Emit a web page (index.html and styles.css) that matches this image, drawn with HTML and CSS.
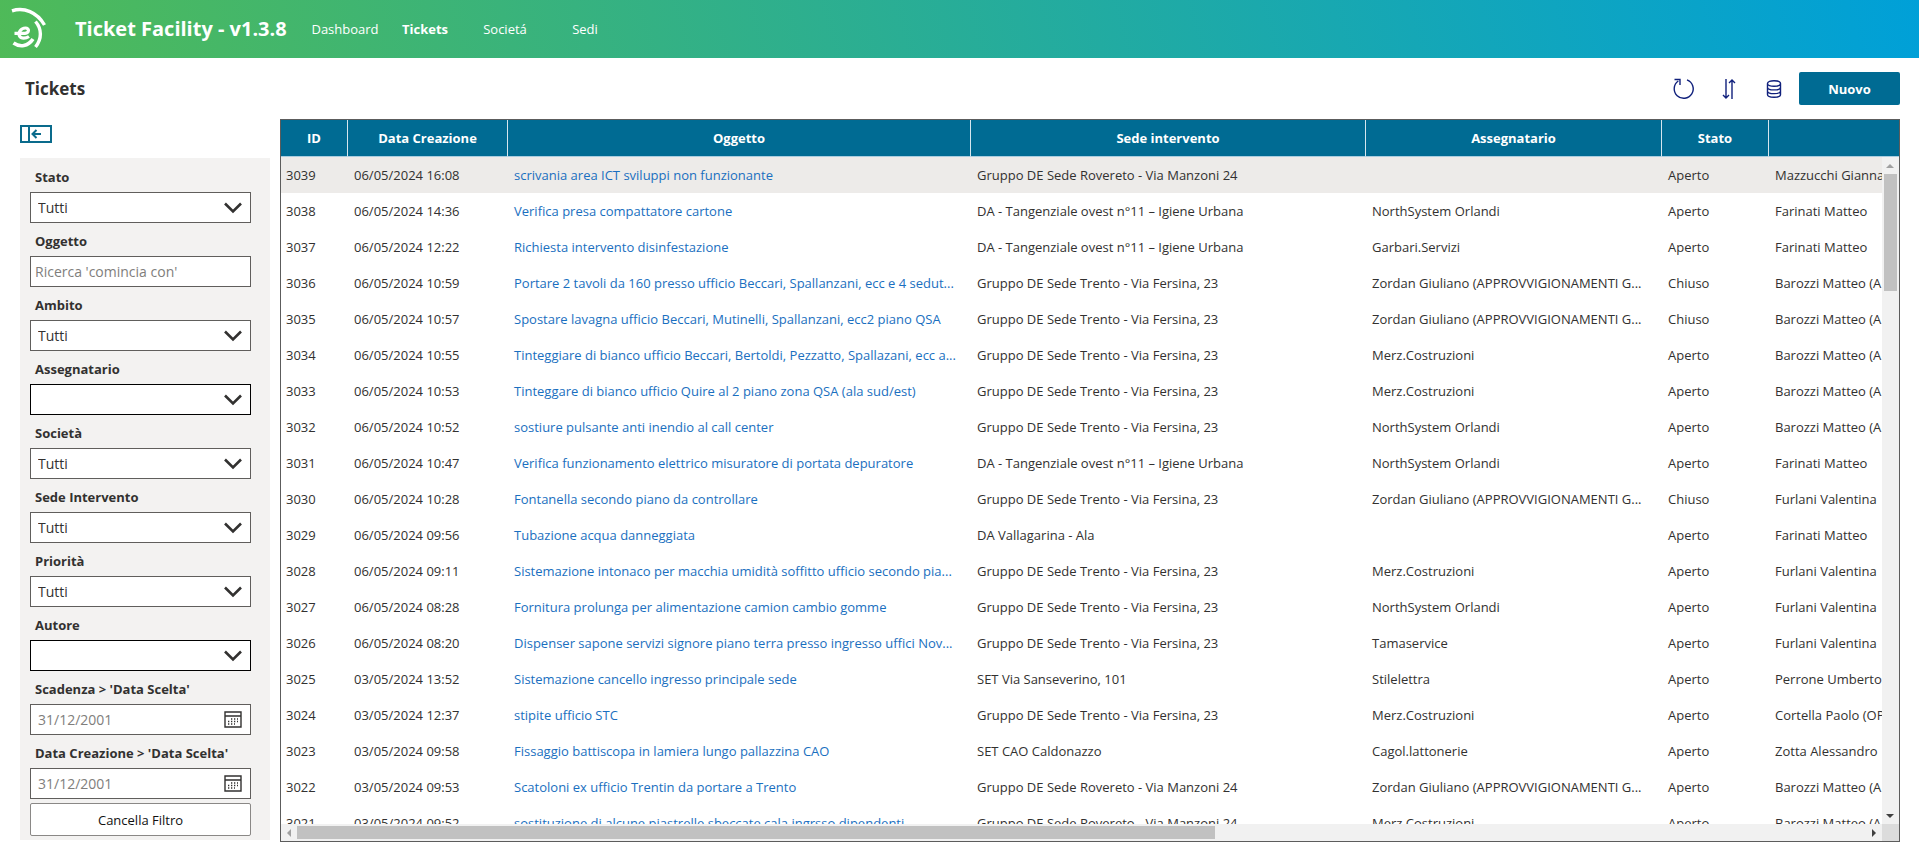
FILE: index.html
```html
<!DOCTYPE html>
<html lang="it">
<head>
<meta charset="utf-8">
<meta name="viewport" content="width=device-width, initial-scale=1">
<title>Ticket Facility</title>
<link rel="stylesheet" href="styles.css">
</head>
<body>
<svg class="sprite" aria-hidden="true">
  <symbol id="chevron" viewBox="0 0 18 12"><path d="M1 1.500 L9 9.500 L17 1.500" fill="none" stroke="currentColor" stroke-width="2.600"/></symbol>
  <symbol id="calendar" viewBox="0 0 18 17">
    <path d="M1 1H17V16H1Z M1 5H17" fill="none" stroke="currentColor" stroke-width="1.4"/>
    <path d="M7 8H14 M4 10.500H14 M4 13H11" fill="none" stroke="currentColor" stroke-width="1.3" stroke-dasharray="1.300 1.700"/>
  </symbol>
</svg>

<header class="topbar">
  <svg class="logo" viewBox="0 0 60 58" role="img" aria-label="Logo">
    <g fill="none" stroke="#fff">
      <path d="M12 10.800 C24 7 37 12 44.500 25" stroke-width="3.400"/>
      <path d="M35.500 21.500 C42 29 42 39 35.500 47" stroke-width="3.400"/>
      <path d="M13.500 43 C20 47.500 28 46.500 33 39" stroke-width="3.600"/>
      <path d="M14.500 33.300 H25 C29.500 33 29.500 28 25.500 28 C20.500 28 18 33 19.500 36 C21 39 26 38.500 29 36.500" stroke-width="3.200"/>
    </g>
  </svg>
  <h1 class="brand">Ticket Facility - v1.3.8</h1>
  <nav class="nav">
    <a href="#dashboard">Dashboard</a>
    <a href="#tickets" class="active" aria-current="page">Tickets</a>
    <a href="#societa">Societá</a>
    <a href="#sedi">Sedi</a>
  </nav>
</header>

<div class="toolbar">
  <h2 class="page-title">Tickets</h2>
  <div class="actions">
    <button class="icon-btn" type="button" aria-label="Aggiorna">
      <svg width="24" height="24" viewBox="0 0 24 24"><path d="M6.300 4 A9.500 9.500 0 1 0 15 2.900 M2.500 2.500 H8 V8" /></svg>
    </button>
    <button class="icon-btn" type="button" aria-label="Ordina">
      <svg width="24" height="24" viewBox="0 0 24 24"><path d="M9 2V21 M6 18 L9 21 L12 18 M15 22V3 M12 6 L15 3 L18 6"/></svg>
    </button>
    <button class="icon-btn" type="button" aria-label="Dati">
      <svg width="24" height="24" viewBox="0 0 24 24"><path d="M5.500 6.500 C5.500 2.800 18.500 2.800 18.500 6.500 C18.500 10.200 5.500 10.200 5.500 6.500 V17.500 C5.500 21.200 18.500 21.200 18.500 17.500 V6.500 M5.500 10.200 C5.500 13.800 18.500 13.800 18.500 10.200 M5.500 13.900 C5.500 17.500 18.500 17.500 18.500 13.900"/></svg>
    </button>
    <button class="primary" type="button">Nuovo</button>
  </div>
</div>

<main class="layout">
  <aside class="side">
    <button class="collapse" type="button" aria-label="Nascondi filtri">
      <svg width="32" height="18" viewBox="0 0 32 18"><path d="M1 1H31V17H1Z M9 1V17 M21 9H13 M16.500 5 L12.500 9 L16.500 13"/></svg>
    </button>
    <form class="filters">
      <label for="stato">Stato</label>
      <div class="field"><select id="stato"><option>Tutti</option></select><svg class="chev"><use href="#chevron"/></svg></div>
      <label for="oggetto">Oggetto</label>
      <div class="field"><input id="oggetto" class="search" type="text" placeholder="Ricerca 'comincia con'"></div>
      <label for="ambito">Ambito</label>
      <div class="field"><select id="ambito"><option>Tutti</option></select><svg class="chev"><use href="#chevron"/></svg></div>
      <label for="assegnatario">Assegnatario</label>
      <div class="field strong"><select id="assegnatario"><option></option></select><svg class="chev"><use href="#chevron"/></svg></div>
      <label for="societa">Società</label>
      <div class="field"><select id="societa"><option>Tutti</option></select><svg class="chev"><use href="#chevron"/></svg></div>
      <label for="sede">Sede Intervento</label>
      <div class="field"><select id="sede"><option>Tutti</option></select><svg class="chev"><use href="#chevron"/></svg></div>
      <label for="priorita">Priorità</label>
      <div class="field"><select id="priorita"><option>Tutti</option></select><svg class="chev"><use href="#chevron"/></svg></div>
      <label for="autore">Autore</label>
      <div class="field strong"><select id="autore"><option></option></select><svg class="chev"><use href="#chevron"/></svg></div>
      <label for="scadenza">Scadenza &gt; 'Data Scelta'</label>
      <div class="field"><input id="scadenza" type="text" placeholder="31/12/2001"><svg class="cal"><use href="#calendar"/></svg></div>
      <label for="creazione">Data Creazione &gt; 'Data Scelta'</label>
      <div class="field"><input id="creazione" type="text" placeholder="31/12/2001"><svg class="cal"><use href="#calendar"/></svg></div>
      <button class="clear" type="button">Cancella Filtro</button>
    </form>
  </aside>

  <section class="grid">
    <div class="viewport">
      <table>
        <colgroup><col class="c-id"><col class="c-date"><col class="c-subject"><col class="c-site"><col class="c-owner"><col class="c-state"><col class="c-author"></colgroup>
        <thead><tr><th>ID</th><th>Data Creazione</th><th>Oggetto</th><th>Sede intervento</th><th>Assegnatario</th><th>Stato</th><th></th></tr></thead>
        <tbody>
          <tr class="selected"><td>3039</td><td>06/05/2024 16:08</td><td><a href="#3039">scrivania area ICT sviluppi non funzionante</a></td><td>Gruppo DE Sede Rovereto - Via Manzoni 24</td><td></td><td>Aperto</td><td>Mazzucchi Gianna</td></tr>
          <tr><td>3038</td><td>06/05/2024 14:36</td><td><a href="#3038">Verifica presa compattatore cartone</a></td><td>DA - Tangenziale ovest n°11 – Igiene Urbana</td><td>NorthSystem Orlandi</td><td>Aperto</td><td>Farinati Matteo</td></tr>
          <tr><td>3037</td><td>06/05/2024 12:22</td><td><a href="#3037">Richiesta intervento disinfestazione</a></td><td>DA - Tangenziale ovest n°11 – Igiene Urbana</td><td>Garbari.Servizi</td><td>Aperto</td><td>Farinati Matteo</td></tr>
          <tr><td>3036</td><td>06/05/2024 10:59</td><td><a href="#3036">Portare 2 tavoli da 160 presso ufficio Beccari, Spallanzani, ecc e 4 sedut...</a></td><td>Gruppo DE Sede Trento - Via Fersina, 23</td><td>Zordan Giuliano (APPROVVIGIONAMENTI G...</td><td>Chiuso</td><td>Barozzi Matteo (A</td></tr>
          <tr><td>3035</td><td>06/05/2024 10:57</td><td><a href="#3035">Spostare lavagna ufficio Beccari, Mutinelli, Spallanzani, ecc2 piano QSA</a></td><td>Gruppo DE Sede Trento - Via Fersina, 23</td><td>Zordan Giuliano (APPROVVIGIONAMENTI G...</td><td>Chiuso</td><td>Barozzi Matteo (A</td></tr>
          <tr><td>3034</td><td>06/05/2024 10:55</td><td><a href="#3034">Tinteggiare di bianco ufficio Beccari, Bertoldi, Pezzatto, Spallazani, ecc a...</a></td><td>Gruppo DE Sede Trento - Via Fersina, 23</td><td>Merz.Costruzioni</td><td>Aperto</td><td>Barozzi Matteo (A</td></tr>
          <tr><td>3033</td><td>06/05/2024 10:53</td><td><a href="#3033">Tinteggare di bianco ufficio Quire al 2 piano zona QSA (ala sud/est)</a></td><td>Gruppo DE Sede Trento - Via Fersina, 23</td><td>Merz.Costruzioni</td><td>Aperto</td><td>Barozzi Matteo (A</td></tr>
          <tr><td>3032</td><td>06/05/2024 10:52</td><td><a href="#3032">sostiure pulsante anti inendio al call center</a></td><td>Gruppo DE Sede Trento - Via Fersina, 23</td><td>NorthSystem Orlandi</td><td>Aperto</td><td>Barozzi Matteo (A</td></tr>
          <tr><td>3031</td><td>06/05/2024 10:47</td><td><a href="#3031">Verifica funzionamento elettrico misuratore di portata depuratore</a></td><td>DA - Tangenziale ovest n°11 – Igiene Urbana</td><td>NorthSystem Orlandi</td><td>Aperto</td><td>Farinati Matteo</td></tr>
          <tr><td>3030</td><td>06/05/2024 10:28</td><td><a href="#3030">Fontanella secondo piano da controllare</a></td><td>Gruppo DE Sede Trento - Via Fersina, 23</td><td>Zordan Giuliano (APPROVVIGIONAMENTI G...</td><td>Chiuso</td><td>Furlani Valentina</td></tr>
          <tr><td>3029</td><td>06/05/2024 09:56</td><td><a href="#3029">Tubazione acqua danneggiata</a></td><td>DA Vallagarina - Ala</td><td></td><td>Aperto</td><td>Farinati Matteo</td></tr>
          <tr><td>3028</td><td>06/05/2024 09:11</td><td><a href="#3028">Sistemazione intonaco per macchia umidità soffitto ufficio secondo pia...</a></td><td>Gruppo DE Sede Trento - Via Fersina, 23</td><td>Merz.Costruzioni</td><td>Aperto</td><td>Furlani Valentina</td></tr>
          <tr><td>3027</td><td>06/05/2024 08:28</td><td><a href="#3027">Fornitura prolunga per alimentazione camion cambio gomme</a></td><td>Gruppo DE Sede Trento - Via Fersina, 23</td><td>NorthSystem Orlandi</td><td>Aperto</td><td>Furlani Valentina</td></tr>
          <tr><td>3026</td><td>06/05/2024 08:20</td><td><a href="#3026">Dispenser sapone servizi signore piano terra presso ingresso uffici Nov...</a></td><td>Gruppo DE Sede Trento - Via Fersina, 23</td><td>Tamaservice</td><td>Aperto</td><td>Furlani Valentina</td></tr>
          <tr><td>3025</td><td>03/05/2024 13:52</td><td><a href="#3025">Sistemazione cancello ingresso principale sede</a></td><td>SET Via Sanseverino, 101</td><td>Stilelettra</td><td>Aperto</td><td>Perrone Umberto</td></tr>
          <tr><td>3024</td><td>03/05/2024 12:37</td><td><a href="#3024">stipite ufficio STC</a></td><td>Gruppo DE Sede Trento - Via Fersina, 23</td><td>Merz.Costruzioni</td><td>Aperto</td><td>Cortella Paolo (OP</td></tr>
          <tr><td>3023</td><td>03/05/2024 09:58</td><td><a href="#3023">Fissaggio battiscopa in lamiera lungo pallazzina CAO</a></td><td>SET CAO Caldonazzo</td><td>Cagol.lattonerie</td><td>Aperto</td><td>Zotta Alessandro</td></tr>
          <tr><td>3022</td><td>03/05/2024 09:53</td><td><a href="#3022">Scatoloni ex ufficio Trentin da portare a Trento</a></td><td>Gruppo DE Sede Rovereto - Via Manzoni 24</td><td>Zordan Giuliano (APPROVVIGIONAMENTI G...</td><td>Aperto</td><td>Barozzi Matteo (A</td></tr>
          <tr><td>3021</td><td>03/05/2024 09:52</td><td><a href="#3021">sostituzione di alcune piastrelle sbeccate cala ingrsso dipendenti</a></td><td>Gruppo DE Sede Rovereto - Via Manzoni 24</td><td>Merz.Costruzioni</td><td>Aperto</td><td>Barozzi Matteo (A</td></tr>
        </tbody>
      </table>
    </div>
    <div class="vbar"><i class="arrow up"></i><div class="vtrack"><div class="vthumb"></div></div><i class="arrow down"></i></div>
    <div class="hbar"><i class="arrow left"></i><div class="htrack"><div class="hthumb"></div></div><i class="arrow right"></i></div>
    <div class="corner"></div>
  </section>
</main>
</body>
</html>
```
FILE: styles.css
```css
* { box-sizing: border-box; }

body {
  margin: 0;
  height: 100vh;
  display: flex;
  flex-direction: column;
  overflow: hidden;
  background: #fff;
  color: #323130;
  font-family: "Open Sans", "Noto Sans", sans-serif;
  font-size: 13px;
}

button, input, select { font: inherit; color: inherit; }
.sprite { display: none; }

.topbar {
  flex: none;
  height: 58px;
  display: flex;
  align-items: center;
  color: #fff;
  background: linear-gradient(75deg, #4fba58, #00a0d8);
}
.logo { width: 60px; height: 58px; margin-right: 15px; }
.brand { width: 230px; margin: 0; font-size: 20px; font-weight: 700; line-height: 26px; white-space: nowrap; }
.nav { display: flex; }
.nav a { width: 80px; text-align: center; color: #fff; text-decoration: none; }
.nav .active { font-weight: 700; }

.toolbar {
  flex: none;
  height: 61px;
  display: flex;
  align-items: center;
  justify-content: space-between;
  padding: 0 19px 0 25px;
}
.page-title { margin: 0; font-size: 17px; font-weight: 700; }
.actions { display: flex; align-items: center; }
.icon-btn { width: 24px; height: 24px; margin-right: 21px; padding: 0; border: 0; background: none; }
.icon-btn:nth-child(3) { margin-right: 13px; }
.icon-btn svg { display: block; fill: none; stroke: #10207c; stroke-width: 1.4; }
.primary {
  width: 101px;
  height: 33px;
  border: 0;
  border-radius: 2px;
  background: #006b93;
  color: #fff;
  font-weight: 700;
}

.layout {
  flex: 1;
  min-height: 0;
  display: grid;
  grid-template-columns: 250px minmax(0, 1fr);
  gap: 10px;
  padding: 0 19px 17px 20px;
}

.side { padding-top: 6px; }
.collapse { display: block; margin-bottom: 15px; padding: 0; border: 0; background: none; }
.collapse svg { display: block; fill: none; stroke: #0a6b8c; stroke-width: 2; }

.filters { padding: 2px 19px 4px 10px; background: #f3f2f1; }
.filters label { display: block; height: 32px; padding-left: 5px; font-weight: 700; line-height: 34px; }
.field { display: grid; height: 31px; margin-bottom: 1px; align-items: center; border: 1px solid #605e5c; background: #fff; }
.field.strong { border-color: #000; }
.field > * { grid-area: 1 / 1; }
.field select, .field input {
  width: 100%;
  height: 29px;
  padding: 0 8px 0 7px;
  border: 0;
  border-radius: 0;
  outline: 0;
  appearance: none;
  background: none;
  font-size: 14px;
}
.field .search { padding-left: 4px; }
.field input::placeholder { color: #807e7c; opacity: 1; }
.field svg { justify-self: end; margin-right: 8px; pointer-events: none; }
.chev { width: 18px; height: 12px; }
.cal { width: 18px; height: 17px; }
.clear { display: block; width: 100%; height: 33px; margin-top: 4px; border: 1px solid #8a8886; border-radius: 2px; background: #fff; color: #111; }

.grid {
  display: grid;
  min-height: 0;
  grid-template: minmax(0, 1fr) 17px / minmax(0, 1fr) 17px;
  border: 1px solid #5c5c5c;
}
.viewport { grid-area: 1 / 1 / 2 / 3; overflow: hidden; }
table { width: 2737px; table-layout: fixed; border-collapse: separate; border-spacing: 0; }
.c-id { width: 67px; }
.c-date { width: 160px; }
.c-subject { width: 463px; }
.c-site { width: 395px; }
.c-owner { width: 296px; }
.c-state { width: 107px; }
th {
  height: 37px;
  padding: 0;
  border-right: 1px solid #d5e6ee;
  border-bottom: 1px solid #a9cde0;
  background: #006b93;
  color: #fff;
  font-weight: 700;
}
td { height: 36px; padding: 0 0 0 6px; overflow: hidden; white-space: nowrap; }
td:first-child { padding-left: 5px; }
td a { color: #1a6fc0; text-decoration: none; }
.selected td { background: #edebe9; }

.vbar { grid-area: 1 / 2; margin-top: 37px; display: flex; flex-direction: column; background: #f1f1f1; }
.hbar { grid-area: 2 / 1; display: flex; background: #f1f1f1; }
.vtrack { flex: 1; padding: 0 2px; }
.htrack { flex: 1; padding: 2px 0; }
.vthumb { height: 18.5%; background: #c1c1c1; }
.hthumb { width: 58.5%; height: 13px; background: #c1c1c1; }
.corner { grid-area: 2 / 2; background: #dcdcdc; }
.arrow { flex: none; width: 16px; height: 17px; display: grid; place-items: center; }
.arrow::before { content: ""; border: 4px solid transparent; }
.up::before { border-top-width: 0; border-bottom-color: #a0a0a0; }
.down::before { border-bottom-width: 0; border-top-color: #404040; }
.left::before { border-left-width: 0; border-right-color: #a0a0a0; }
.right::before { border-right-width: 0; border-left-color: #404040; }
```
